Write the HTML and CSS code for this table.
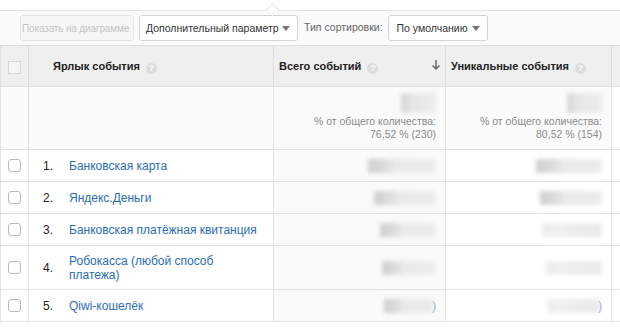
FILE: index.html
```html
<!DOCTYPE html>
<html lang="ru">
<head>
<meta charset="utf-8">
<link rel="stylesheet" href="styles.css">
</head>
<body>
<div class="top"></div>
<div class="toolbar">
  <span class="btn disabled">Показать на диаграмме</span>
  <span class="btn select wide">Дополнительный параметр<i class="caret"></i></span>
  <span class="lbl">Тип сортировки:</span>
  <span class="btn select sort">По умолчанию<i class="caret"></i></span>
</div>
<table class="grid">
  <colgroup>
    <col class="c-check"><col class="c-label"><col class="c-total"><col class="c-uniq"><col class="c-rest">
  </colgroup>
  <thead>
    <tr>
      <th class="chk"><span class="box-h"></span></th>
      <th class="lab">Ярлык события <i class="help">?</i></th>
      <th class="met sorted">Всего событий <i class="help">?</i>
        <svg class="arrow" width="10" height="12" viewBox="0 0 10 12"><path d="M5 1v9M1.5 6.5L5 10l3.5-3.5" fill="none" stroke="#666" stroke-width="1.5"/></svg>
      </th>
      <th class="met">Уникальные события <i class="help">?</i></th>
      <th class="rest"></th>
    </tr>
  </thead>
  <tbody>
    <tr class="totals">
      <td></td>
      <td></td>
      <td class="num sorted"><span class="blur tb"></span><span class="pct">% от общего количества:<br>76,52 % (230)</span></td>
      <td class="num"><span class="blur tb"></span><span class="pct">% от общего количества:<br>80,52 % (154)</span></td>
      <td class="rest"></td>
    </tr>
    <tr>
      <td class="chk"><span class="box"></span></td>
      <td class="lab"><div class="cell"><span class="idx">1.</span><a class="name">Банковская карта</a></div></td>
      <td class="num sorted"><span class="blur w68"></span></td>
      <td class="num"><span class="blur w66"></span></td>
      <td class="rest"></td>
    </tr>
    <tr>
      <td class="chk"><span class="box"></span></td>
      <td class="lab"><div class="cell"><span class="idx">2.</span><a class="name">Яндекс.Деньги</a></div></td>
      <td class="num sorted"><span class="blur w62"></span></td>
      <td class="num"><span class="blur w62"></span></td>
      <td class="rest"></td>
    </tr>
    <tr>
      <td class="chk"><span class="box"></span></td>
      <td class="lab"><div class="cell"><span class="idx">3.</span><a class="name">Банковская платёжная квитанция</a></div></td>
      <td class="num sorted"><span class="blur w56"></span></td>
      <td class="num"><span class="blur w60 faint"></span></td>
      <td class="rest"></td>
    </tr>
    <tr class="tall">
      <td class="chk"><span class="box"></span></td>
      <td class="lab"><div class="cell"><span class="idx">4.</span><a class="name">Робокасса (любой способ платежа)</a></div></td>
      <td class="num sorted"><span class="blur w54"></span></td>
      <td class="num"><span class="blur w56 faint"></span></td>
      <td class="rest"></td>
    </tr>
    <tr>
      <td class="chk"><span class="box"></span></td>
      <td class="lab"><div class="cell"><span class="idx">5.</span><a class="name">Qiwi-кошелёк</a></div></td>
      <td class="num sorted"><span class="blur w50"></span><span class="par">)</span></td>
      <td class="num"><span class="blur w52 faint"></span><span class="par">)</span></td>
      <td class="rest"></td>
    </tr>
  </tbody>
</table>
</body>
</html>
```
FILE: styles.css
```css
html, body {
  margin: 0;
  padding: 0;
  background: #fff;
  font-family: "Liberation Sans", Arial, sans-serif;
  font-size: 11px;
  color: #222;
  width: 620px;
  overflow: hidden;
}
.top {
  height: 10px;
  background: #fff;
}
.toolbar {
  position: relative;
  height: 34px;
  border-top: 1px solid #e3e3e3;
  background: #fafafa;
  padding: 4px 0 0 20px;
  box-sizing: border-box;
  display: flex;
  align-items: flex-start;
  gap: 5px;
  font-size: 10.5px;
}
.toolbar::before {
  content: "";
  position: absolute;
  left: 268px;
  top: -6px;
  width: 8px;
  height: 8px;
  background: #fff;
  border-left: 1px solid #e3e3e3;
  border-top: 1px solid #e3e3e3;
  transform: rotate(45deg);
}
.toolbar::after {
  content: "";
  position: absolute;
  left: 264px;
  top: 0;
  width: 18px;
  height: 4px;
  background: #fafafa;
}
.btn {
  display: inline-flex;
  align-items: center;
  height: 26px;
  box-sizing: border-box;
  border: 1px solid #d4d4d4;
  border-radius: 3px;
  padding: 0 7px 0 6px;
  background: #fff;
  color: #333;
  white-space: nowrap;
}
.btn.disabled {
  color: #c4c4c4;
  border-color: #e4e4e4;
  background: #f6f6f6;
  padding: 0 0 0 1px;
  font-size: 10px;
  letter-spacing: -0.15px;
  width: 114px;
}
.btn.wide {
  width: 159px;
}
.btn.sort {
  width: 100px;
  padding-left: 8px;
}
.caret {
  margin-left: auto;
  width: 0;
  height: 0;
  border-left: 4px solid transparent;
  border-right: 4px solid transparent;
  border-top: 5px solid #777;
}
.lbl {
  color: #666;
  height: 26px;
  line-height: 24px;
  margin-left: 1px;
}
.grid {
  width: 620px;
  border-collapse: collapse;
  table-layout: fixed;
  margin-top: 1px;
}
.c-check { width: 28px; }
.c-label { width: 245px; }
.c-total { width: 172px; }
.c-uniq { width: 166px; }
.c-rest { width: 9px; }
.grid th, .grid td {
  border: 1px solid #e2e2e2;
  padding: 0;
  vertical-align: middle;
}
.grid thead tr {
  height: 41px;
  background: #efefef;
}
.grid th {
  text-align: left;
  font-weight: bold;
  font-size: 11px;
  color: #222;
  border-color: #dedede;
  white-space: nowrap;
  position: relative;
  padding-top: 2px;
}
th.lab { padding-left: 24px; }
th.met { padding-left: 5px; }
.help {
  display: inline-block;
  width: 11px;
  height: 11px;
  border-radius: 50%;
  background: #dcdcdc;
  color: #fff;
  font-style: normal;
  font-size: 9px;
  line-height: 11px;
  text-align: center;
  margin-left: 3px;
  vertical-align: -1px;
}
.arrow {
  position: absolute;
  right: 4px;
  top: 13px;
}
.box-h {
  display: block;
  width: 11px;
  height: 11px;
  border: 1px solid #d8d8d8;
  background: #f4f4f4;
  margin: 0 auto;
}
.totals td { background: #fbfbfb; }
.grid tbody tr { height: 32px; }
.grid tbody tr.totals { height: 63px; }
.grid tbody tr.tall { height: 44px; }
.grid tbody td.sorted { background: #fafafa; }
.grid td.rest { background: #fff; }
.box {
  display: block;
  width: 11px;
  height: 11px;
  border: 1px solid #b9b9b9;
  border-radius: 3px;
  margin: 0 auto;
  background: #fff;
}
.cell {
  display: flex;
  align-items: center;
}
.idx {
  width: 40px;
  box-sizing: border-box;
  padding-left: 14px;
  font-size: 12px;
  color: #222;
  flex: none;
}
.name {
  font-size: 12px;
  color: #2a6db4;
  width: 192px;
  line-height: 14px;
}
td.num {
  text-align: right;
  padding-right: 9px;
}
.totals td.num {
  vertical-align: top;
  padding-top: 6px;
}
.pct {
  display: block;
  color: #8a8a8a;
  font-size: 10.5px;
  line-height: 13px;
  margin-top: 2px;
}
.blur {
  display: inline-block;
  height: 14px;
  background: linear-gradient(90deg, #cfcfcf 0, #dcdcdc 25%, #e9e9e9 40%, #ececec 100%);
  filter: blur(2px);
  vertical-align: middle;
}
.blur.tb {
  width: 35px;
  height: 20px;
  background: linear-gradient(90deg, #d4d4d4 0, #e6e6e6 30%, #ececec 100%);
}
.blur.faint {
  background: linear-gradient(90deg, #ececec 0, #f0f0f0 30%, #ededed 40%, #eaeaea 100%);
}
.w68 { width: 68px; }
.w66 { width: 66px; }
.w62 { width: 62px; }
.w60 { width: 60px; }
.w56 { width: 56px; }
.w54 { width: 54px; }
.w52 { width: 52px; }
.w50 { width: 50px; }
.par {
  color: #7b8db8;
  font-size: 12px;
  vertical-align: middle;
  margin-left: -2px;
}
```
